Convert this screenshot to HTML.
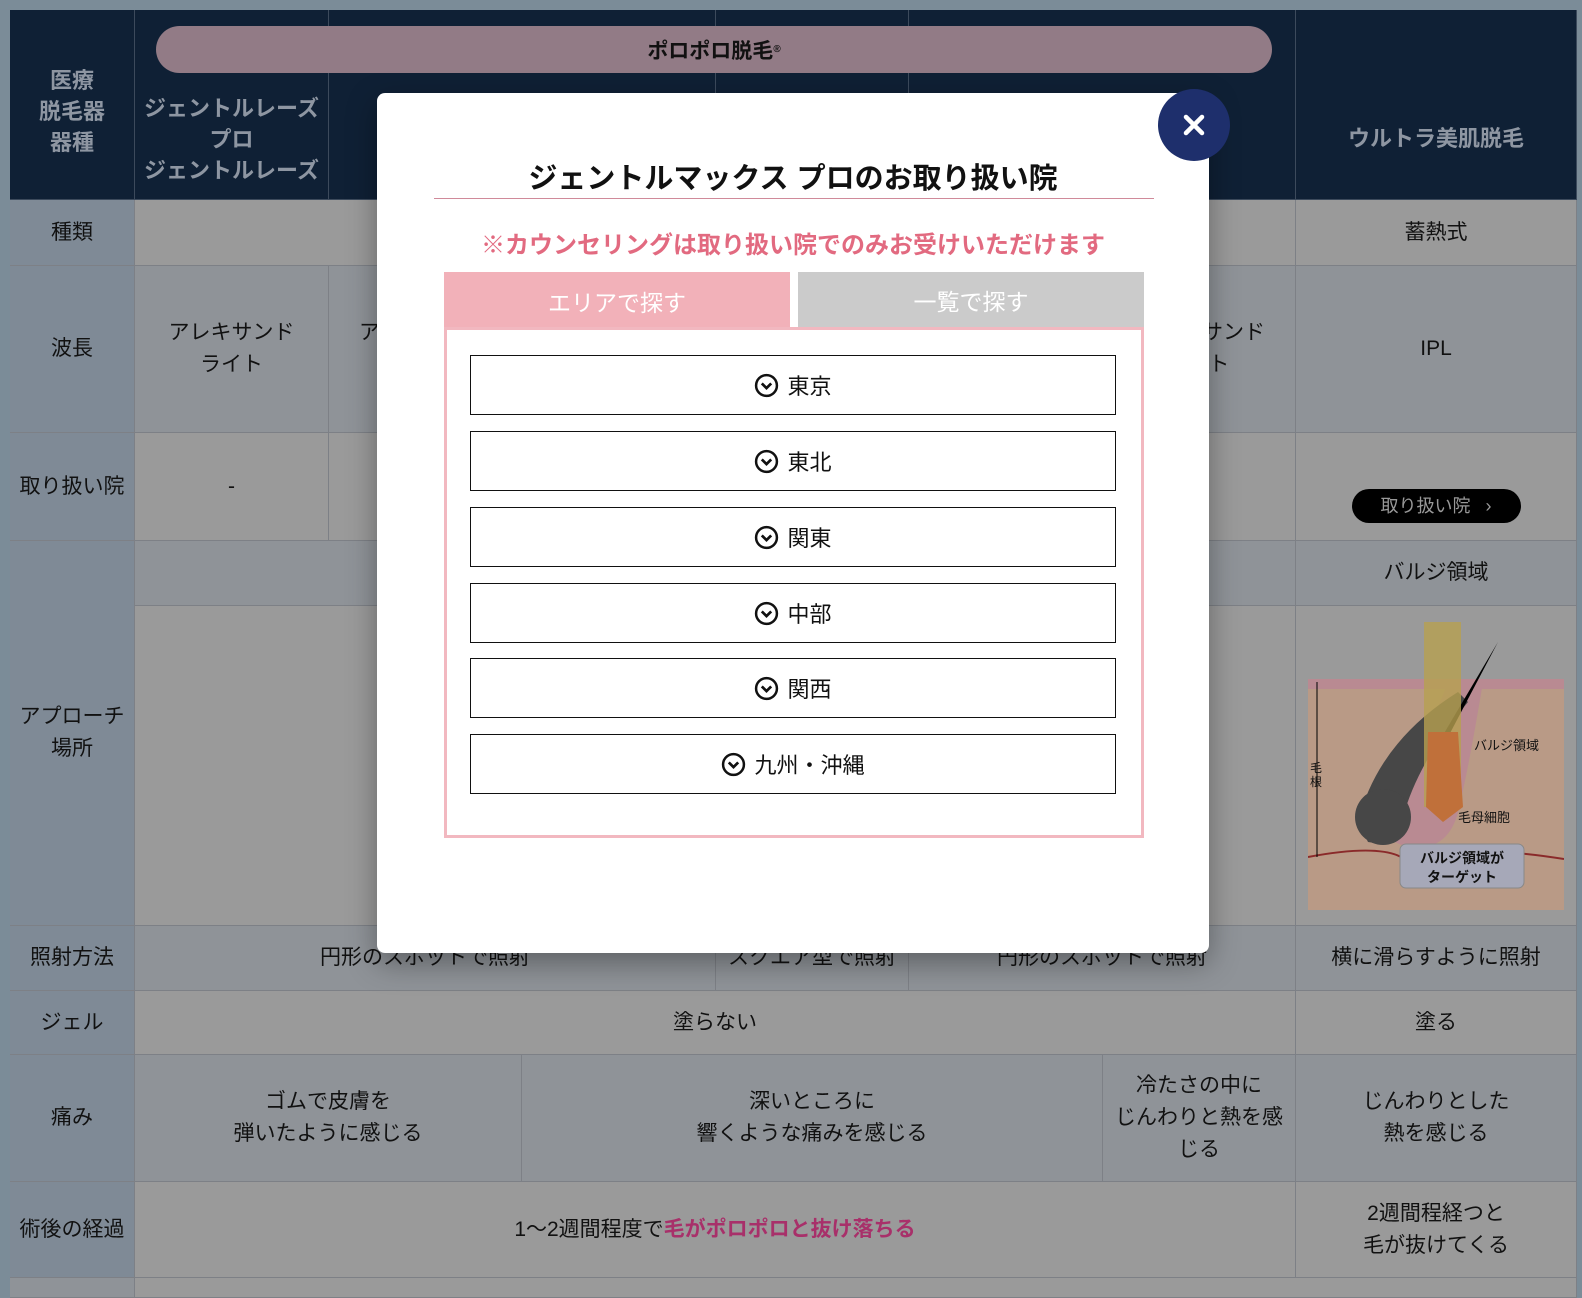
<!DOCTYPE html>
<html><head><meta charset="utf-8">
<style>
*{margin:0;padding:0;box-sizing:border-box}
body{width:1582px;height:1288px;overflow:hidden;background:#7b8c98;font-family:"Liberation Sans","Noto Sans CJK JP",sans-serif;position:relative;color:#111}
.c{position:absolute;display:flex;align-items:center;justify-content:center;text-align:center;font-size:21px;line-height:32px;border-right:1px solid #7d8086;border-bottom:1px solid #7d8086}
.h{background:#0f2035;color:#8e96a2;font-weight:bold;font-size:22px;border-color:#3c4a5c}
.l{background:#7f8a96}
.g{background:#9a9a9a}
.b{background:#8f9398}
#modal{position:absolute;left:377px;top:93px;width:832px;height:860px;background:#fff;border-radius:8px;box-shadow:0 10px 30px rgba(0,0,0,.35)}
.btn{position:absolute;left:93px;width:646px;height:60px;border:1.5px solid #111;display:flex;align-items:center;justify-content:center;font-size:22px;color:#111}
.btn svg{margin-right:8px}
</style></head><body>
<div class="c h" style="left:10px;top:10px;width:125px;height:190px;line-height:31px;padding-top:14px">医療<br>脱毛器<br>器種</div>
<div class="c h" style="left:135px;top:10px;width:194px;height:190px;line-height:31px;padding-top:70px">ジェントルレーズ<br>プロ<br>ジェントルレーズ</div>
<div class="c h" style="left:329px;top:10px;width:387px;height:190px"></div>
<div class="c h" style="left:716px;top:10px;width:193px;height:190px"></div>
<div class="c h" style="left:909px;top:10px;width:387px;height:190px"></div>
<div class="c h" style="left:1296px;top:10px;width:281px;height:190px;padding-top:68px">ウルトラ美肌脱毛</div>
<div style="position:absolute;left:156px;top:26px;width:1116px;height:47px;border-radius:24px;background:#927b86;display:flex;align-items:center;justify-content:center;font-weight:bold;font-size:21px;color:#111">ポロポロ脱毛<sup style="font-size:10px">®</sup></div>
<div class="c l" style="left:10px;top:200px;width:125px;height:66px">種類</div>
<div class="c g" style="left:135px;top:200px;width:1161px;height:66px"></div>
<div class="c g" style="left:1296px;top:200px;width:281px;height:66px">蓄熱式</div>
<div class="c l" style="left:10px;top:266px;width:125px;height:167px">波長</div>
<div class="c b" style="left:135px;top:266px;width:194px;height:167px">アレキサンド<br>ライト</div>
<div class="c b" style="left:329px;top:266px;width:387px;height:167px;justify-content:flex-start;padding-left:30px;padding-bottom:32px">ア</div>
<div class="c b" style="left:716px;top:266px;width:193px;height:167px"></div>
<div class="c b" style="left:909px;top:266px;width:387px;height:167px;justify-content:flex-end;padding-right:30px">サンド<br>ト&nbsp;&nbsp;&nbsp;&nbsp;&nbsp;</div>
<div class="c b" style="left:1296px;top:266px;width:281px;height:167px">IPL</div>
<div class="c l" style="left:10px;top:433px;width:125px;height:108px">取り扱い院</div>
<div class="c g" style="left:135px;top:433px;width:194px;height:108px">-</div>
<div class="c g" style="left:329px;top:433px;width:967px;height:108px"></div>
<div class="c g" style="left:1296px;top:433px;width:281px;height:108px"><div style="margin-top:38px;background:#000;color:#999;border-radius:18px;width:169px;height:34px;font-size:18px;line-height:34px">取り扱い院&nbsp;&nbsp;&nbsp;›</div></div>
<div class="c l" style="left:10px;top:541px;width:125px;height:385px">アプローチ<br>場所</div>
<div class="c b" style="left:135px;top:541px;width:1161px;height:65px"></div>
<div class="c b" style="left:1296px;top:541px;width:281px;height:65px">バルジ領域</div>
<div class="c g" style="left:135px;top:606px;width:1161px;height:320px"></div>
<div class="c g" style="left:1296px;top:606px;width:281px;height:320px"></div>
<svg style="position:absolute;left:1308px;top:622px" width="256" height="288" viewBox="0 0 256 288">
<rect x="0" y="57" width="256" height="231" fill="#b99a86"/>
<rect x="0" y="57" width="256" height="10" fill="#b98a92"/>
<path d="M80 170 Q110 140 140 60 L175 60 Q160 150 150 190 Q140 230 100 225 Q60 215 80 170Z" fill="#b98a92"/>
<path d="M50 200 Q70 120 150 70 L160 80 Q110 140 95 195 Q85 225 60 220Z" fill="#474747"/>
<circle cx="75" cy="195" r="28" fill="#474747"/>
<path d="M190 20 L125 130 L130 134Z" fill="#000"/>
<rect x="116" y="0" width="37" height="185" fill="#b7a050" opacity=".8"/>
<path d="M120 110 L150 110 L155 185 L135 200 L118 185Z" fill="#c0703a"/>
<path d="M0 235 Q80 220 100 240 Q150 220 256 237" stroke="#8a2a2a" stroke-width="2" fill="none"/>
<rect x="92" y="222" width="124" height="44" rx="6" fill="#a6a8b8" stroke="#888"/>
<text x="154" y="241" font-size="14" font-weight="bold" text-anchor="middle" fill="#111">バルジ領域が</text>
<text x="154" y="260" font-size="14" font-weight="bold" text-anchor="middle" fill="#111">ターゲット</text>
<text x="166" y="128" font-size="13" fill="#111">バルジ領域</text>
<text x="150" y="200" font-size="13" fill="#111">毛母細胞</text>
<line x1="9" y1="60" x2="9" y2="235" stroke="#000"/>
<text x="2" y="150" font-size="12" fill="#111">毛</text><text x="2" y="164" font-size="12" fill="#111">根</text>
</svg>
<div class="c l" style="left:10px;top:926px;width:125px;height:65px">照射方法</div>
<div class="c b" style="left:135px;top:926px;width:581px;height:65px">円形のスポットで照射</div>
<div class="c b" style="left:716px;top:926px;width:193px;height:65px">スクエア型で照射</div>
<div class="c b" style="left:909px;top:926px;width:387px;height:65px">円形のスポットで照射</div>
<div class="c b" style="left:1296px;top:926px;width:281px;height:65px">横に滑らすように照射</div>
<div class="c l" style="left:10px;top:991px;width:125px;height:64px">ジェル</div>
<div class="c g" style="left:135px;top:991px;width:1161px;height:64px">塗らない</div>
<div class="c g" style="left:1296px;top:991px;width:281px;height:64px">塗る</div>
<div class="c l" style="left:10px;top:1055px;width:125px;height:127px">痛み</div>
<div class="c b" style="left:135px;top:1055px;width:387px;height:127px">ゴムで皮膚を<br>弾いたように感じる</div>
<div class="c b" style="left:522px;top:1055px;width:581px;height:127px">深いところに<br>響くような痛みを感じる</div>
<div class="c b" style="left:1103px;top:1055px;width:193px;height:127px">冷たさの中に<br>じんわりと熱を感<br>じる</div>
<div class="c b" style="left:1296px;top:1055px;width:281px;height:127px">じんわりとした<br>熱を感じる</div>
<div class="c l" style="left:10px;top:1182px;width:125px;height:96px">術後の経過</div>
<div class="c g" style="left:135px;top:1182px;width:1161px;height:96px">1〜2週間程度で<b style="color:#a8306a">毛がポロポロと抜け落ちる</b></div>
<div class="c g" style="left:1296px;top:1182px;width:281px;height:96px">2週間程経つと<br>毛が抜けてくる</div>
<div class="c b" style="left:10px;top:1278px;width:125px;height:20px"></div>
<div class="c g" style="left:135px;top:1278px;width:1442px;height:20px"></div>

<div id="modal">
 <div style="position:absolute;left:0;top:62px;width:100%;text-align:center;font-size:29px;font-weight:bold;color:#111">ジェントルマックス プロのお取り扱い院</div>
 <div style="position:absolute;left:57px;top:105px;width:720px;height:1px;background:#d08a9a"></div>
 <div style="position:absolute;left:0;top:132px;width:100%;text-align:center;font-size:24px;font-weight:bold;color:#e26a80">※カウンセリングは取り扱い院でのみお受けいただけます</div>
 <div style="position:absolute;left:67px;top:179px;width:346px;height:58px;background:#f2b1b9;color:#fff;font-size:23px;display:flex;align-items:center;justify-content:center">エリアで探す</div>
 <div style="position:absolute;left:421px;top:179px;width:346px;height:55px;background:#cbcbcb;color:#fff;font-size:23px;display:flex;align-items:center;justify-content:center">一覧で探す</div>
 <div style="position:absolute;left:67px;top:235px;width:700px;height:510px;border:3px solid #f2b8c0;border-top:none"></div>
 <div style="position:absolute;left:67px;top:234px;width:700px;height:3px;background:#f2b8c0"></div>
</div>
<div style="position:absolute;left:377px;top:92px;width:832px;height:860px">
 <div class="btn" style="top:263px"><svg width="25" height="25" viewBox="0 0 24 24"><circle cx="12" cy="12" r="10" fill="none" stroke="#111" stroke-width="2.4"/><path d="M7.5 10 L12 14.5 L16.5 10" fill="none" stroke="#111" stroke-width="2.6"/></svg>東京</div>
 <div class="btn" style="top:339px"><svg width="25" height="25" viewBox="0 0 24 24"><circle cx="12" cy="12" r="10" fill="none" stroke="#111" stroke-width="2.4"/><path d="M7.5 10 L12 14.5 L16.5 10" fill="none" stroke="#111" stroke-width="2.6"/></svg>東北</div>
 <div class="btn" style="top:415px"><svg width="25" height="25" viewBox="0 0 24 24"><circle cx="12" cy="12" r="10" fill="none" stroke="#111" stroke-width="2.4"/><path d="M7.5 10 L12 14.5 L16.5 10" fill="none" stroke="#111" stroke-width="2.6"/></svg>関東</div>
 <div class="btn" style="top:491px"><svg width="25" height="25" viewBox="0 0 24 24"><circle cx="12" cy="12" r="10" fill="none" stroke="#111" stroke-width="2.4"/><path d="M7.5 10 L12 14.5 L16.5 10" fill="none" stroke="#111" stroke-width="2.6"/></svg>中部</div>
 <div class="btn" style="top:566px"><svg width="25" height="25" viewBox="0 0 24 24"><circle cx="12" cy="12" r="10" fill="none" stroke="#111" stroke-width="2.4"/><path d="M7.5 10 L12 14.5 L16.5 10" fill="none" stroke="#111" stroke-width="2.6"/></svg>関西</div>
 <div class="btn" style="top:642px"><svg width="25" height="25" viewBox="0 0 24 24"><circle cx="12" cy="12" r="10" fill="none" stroke="#111" stroke-width="2.4"/><path d="M7.5 10 L12 14.5 L16.5 10" fill="none" stroke="#111" stroke-width="2.6"/></svg>九州・沖縄</div>
</div>
<div style="position:absolute;left:1158px;top:89px;width:72px;height:72px;border-radius:50%;background:#1e2f6c;display:flex;align-items:center;justify-content:center">
<svg width="22" height="22" viewBox="0 0 22 22"><path d="M3 3 L19 19 M19 3 L3 19" stroke="#fff" stroke-width="4.5" stroke-linecap="round"/></svg></div>
</body></html>
